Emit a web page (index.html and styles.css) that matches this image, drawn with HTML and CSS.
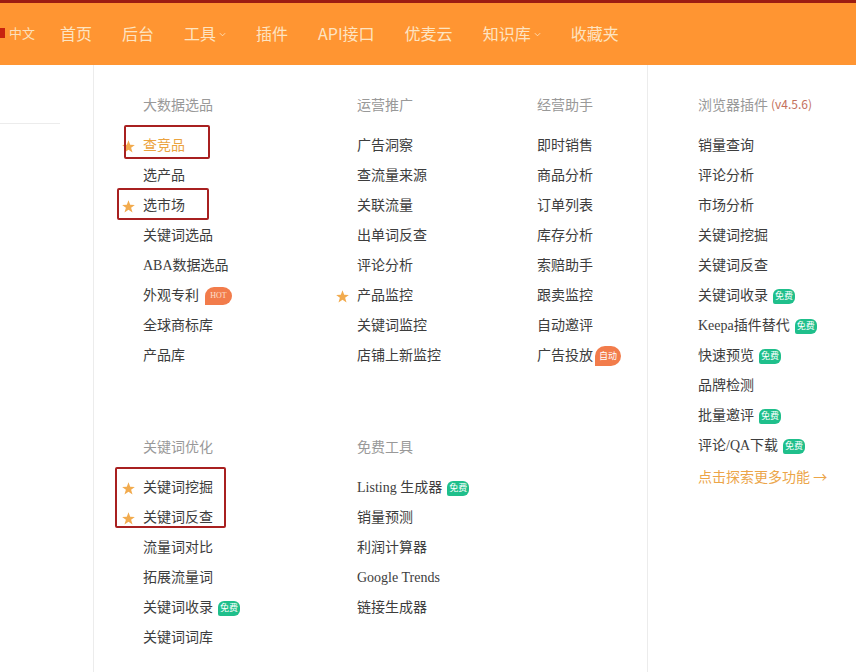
FILE: index.html
```html
<!DOCTYPE html>
<html lang="zh-CN">
<head>
<meta charset="utf-8">
<title>Menu</title>
<link rel="stylesheet" href="styles.css">
</head>
<body>
<div class="page">
  <header class="topbar">
    <div class="lang"><span class="lang-mark"></span><span>中文</span></div>
    <nav class="nav">
      <a class="nav-item">首页</a>
      <a class="nav-item">后台</a>
      <a class="nav-item">工具<svg class="chev" viewBox="0 0 8 5" width="7" height="5"><path d="M1 1 L4 4 L7 1" fill="none" stroke="#fde3c0" stroke-width="1"/></svg></a>
      <a class="nav-item">插件</a>
      <a class="nav-item sans">API接口</a>
      <a class="nav-item">优麦云</a>
      <a class="nav-item">知识库<svg class="chev" viewBox="0 0 8 5" width="7" height="5"><path d="M1 1 L4 4 L7 1" fill="none" stroke="#fde3c0" stroke-width="1"/></svg></a>
      <a class="nav-item">收藏夹</a>
    </nav>
  </header>

  <div class="body">
    <aside class="side"><div class="side-line"></div></aside>

    <main class="menu">
      <div class="row">
        <section class="col c1">
          <h3 class="head">大数据选品</h3>
          <ul>
            <li class="star hl">查竞品</li>
            <li>选产品</li>
            <li class="star">选市场</li>
            <li>关键词选品</li>
            <li>ABA数据选品</li>
            <li>外观专利<span class="tag hot">HOT</span></li>
            <li>全球商标库</li>
            <li>产品库</li>
          </ul>
        </section>
        <section class="col c2">
          <h3 class="head">运营推广</h3>
          <ul>
            <li>广告洞察</li>
            <li>查流量来源</li>
            <li>关联流量</li>
            <li>出单词反查</li>
            <li>评论分析</li>
            <li class="star">产品监控</li>
            <li>关键词监控</li>
            <li>店铺上新监控</li>
          </ul>
        </section>
        <section class="col c3">
          <h3 class="head">经营助手</h3>
          <ul>
            <li>即时销售</li>
            <li>商品分析</li>
            <li>订单列表</li>
            <li>库存分析</li>
            <li>索赔助手</li>
            <li>跟卖监控</li>
            <li>自动邀评</li>
            <li>广告投放<span class="tag auto">自动</span></li>
          </ul>
        </section>
      </div>
      <div class="row row2">
        <section class="col c1">
          <h3 class="head">关键词优化</h3>
          <ul>
            <li class="star">关键词挖掘</li>
            <li class="star">关键词反查</li>
            <li>流量词对比</li>
            <li>拓展流量词</li>
            <li>关键词收录<span class="tag free">免费</span></li>
            <li>关键词词库</li>
          </ul>
        </section>
        <section class="col c2">
          <h3 class="head">免费工具</h3>
          <ul>
            <li>Listing 生成器<span class="tag free">免费</span></li>
            <li>销量预测</li>
            <li>利润计算器</li>
            <li>Google Trends</li>
            <li>链接生成器</li>
          </ul>
        </section>
      </div>
    </main>

    <section class="plugin">
      <h3 class="head">浏览器插件<span class="ver">(v4.5.6)</span></h3>
      <ul>
        <li>销量查询</li>
        <li>评论分析</li>
        <li>市场分析</li>
        <li>关键词挖掘</li>
        <li>关键词反查</li>
        <li>关键词收录<span class="tag free">免费</span></li>
        <li>Keepa插件替代<span class="tag free">免费</span></li>
        <li>快速预览<span class="tag free">免费</span></li>
        <li>品牌检测</li>
        <li>批量邀评<span class="tag free">免费</span></li>
        <li>评论/QA下载<span class="tag free">免费</span></li>
        <li class="more">点击探索更多功能 →</li>
      </ul>
    </section>
  </div>

  <div class="mark m1"></div>
  <div class="mark m2"></div>
  <div class="mark m3"></div>
</div>
</body>
</html>
```

FILE: styles.css
```css
* { box-sizing: border-box; }
html, body { margin: 0; padding: 0; background: #fff; }
body {
  font-family: "Liberation Serif", "Noto Sans CJK SC", serif;
  color: #3d3d3d;
  width: 856px;
  height: 672px;
  overflow: hidden;
}
.page { position: relative; width: 856px; height: 672px; }

.topbar {
  height: 65px;
  border-top: 3px solid #9c1d12;
  background: #ff9532;
  display: flex;
  align-items: center;
  padding-bottom: 3px;
  color: #fde4c2;
}
.lang {
  display: flex;
  align-items: center;
  font-family: "Noto Sans CJK SC", sans-serif;
  font-size: 13px;
  color: #fbe0bc;
  width: 60px;
}
.lang-mark {
  width: 5px;
  height: 10px;
  background: #c8230f;
  margin-right: 4px;
}
.nav { display: flex; align-items: center; gap: 30px; }
.nav-item {
  font-family: "Noto Sans CJK SC", sans-serif;
  font-size: 16px;
  color: #fde4c2;
  display: flex;
  align-items: center;
}
.chev { margin-left: 3px; margin-top: 3px; }

.body { display: flex; height: 607px; }
.side {
  width: 94px;
  border-right: 1px solid #ececec;
}
.side-line {
  margin-top: 58px;
  width: 60px;
  height: 1px;
  background: #ececec;
}

.menu {
  width: 554px;
  border-right: 1px solid #ececec;
  padding: 24px 0 0 49px;
}
.row { display: flex; }
.row2 { margin-top: 60px; }
.c1 { width: 214px; }
.c2 { width: 180px; }
.c3 { width: 110px; }

.head {
  margin: 0 0 12px 0;
  height: 30px;
  display: flex;
  align-items: center;
  font-weight: normal;
  font-size: 14px;
  line-height: 30px;
  color: #999;
  font-family: "Noto Sans CJK SC", sans-serif;
}
ul { list-style: none; margin: 0; padding: 0; }
li {
  font-size: 14px;
  line-height: 30px;
  height: 30px;
  color: #3d3d3d;
  position: relative;
  display: flex;
  align-items: center;
  white-space: nowrap;
}
li.hl { color: #eba340; }
li.star::before {
  content: "";
  position: absolute;
  left: -21px;
  top: 9px;
  width: 13px;
  height: 13px;
  background: #f2ab4e;
  clip-path: polygon(50% 2%, 63% 36%, 99% 38%, 70% 60%, 81% 96%, 50% 75%, 19% 96%, 30% 60%, 1% 38%, 37% 36%);
}

.tag {
  display: inline-flex;
  align-items: center;
  justify-content: center;
  color: #fff;
  font-family: "Noto Sans CJK SC", sans-serif;
}
.free {
  background: #1fbf8b;
  font-size: 9px;
  height: 15px;
  width: 22px;
  border-radius: 6px 6px 6px 2px;
  margin-left: 5px;
}
.hot {
  background: #f27c4b;
  font-family: "Liberation Serif", serif;
  font-size: 8px;
  height: 18px;
  width: 27px;
  border-radius: 9px 9px 9px 0;
  margin-left: 6px;
  color: #fde0d0;
}
.auto {
  background: #f27c4b;
  font-size: 9px;
  height: 20px;
  width: 26px;
  border-radius: 10px 10px 10px 0;
  margin-left: 2px;
}

.plugin { padding: 24px 0 0 50px; }
.ver {
  font-size: 12px;
  line-height: 1;
  color: #c4705c;
  margin-left: 3px;
  font-family: "Noto Sans CJK SC", sans-serif;
}
li.more {
  color: #eca548;
  font-family: "Noto Sans CJK SC", sans-serif;
}

.mark {
  position: absolute;
  border: 2px solid #a82020;
  border-radius: 2px;
}
.m1 { left: 124px; top: 125px; width: 86px; height: 34px; }
.m2 { left: 117px; top: 188px; width: 92px; height: 32px; }
.m3 { left: 115px; top: 467px; width: 111px; height: 61px; }
```
